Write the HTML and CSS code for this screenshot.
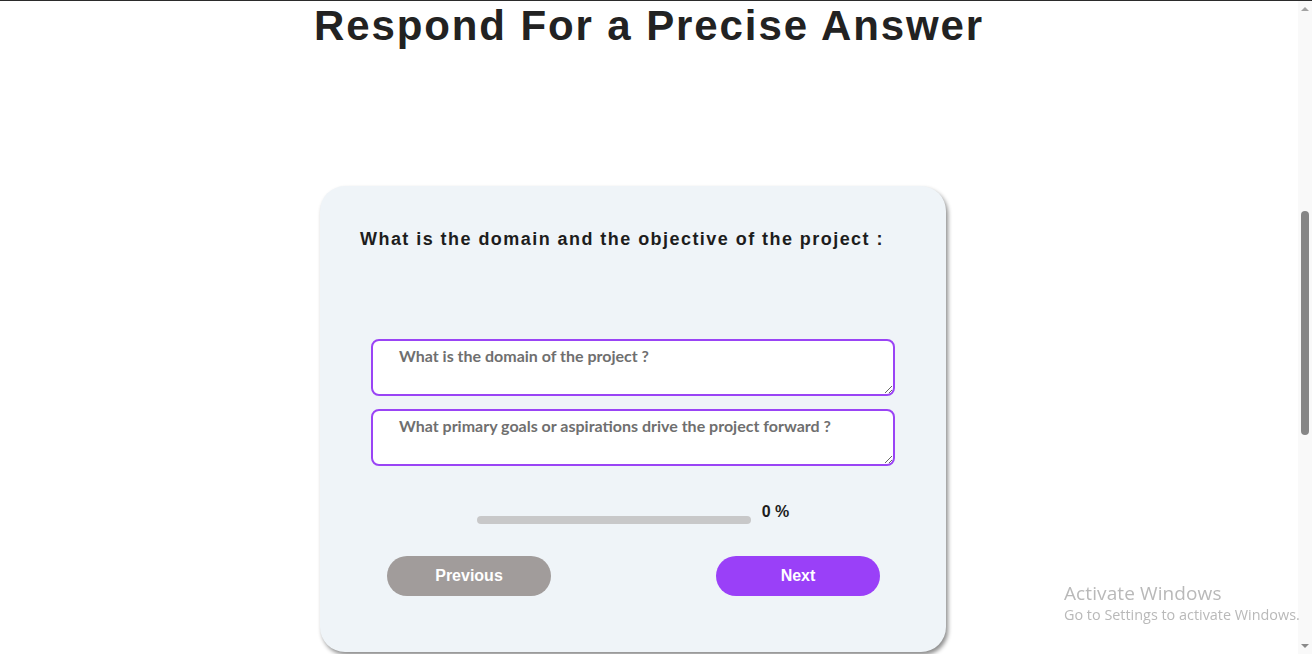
FILE: index.html
```html
<!DOCTYPE html>
<html>
<head>
<meta charset="utf-8">
<link rel="stylesheet" href="styles.css">
</head>
<body>
<div class="page">
  <h1 class="title">Respond For a Precise Answer</h1>
  <div class="card">
    <h2 class="question">What is the domain and the objective of the project :</h2>
    <div class="fields">
      <textarea class="field" placeholder="What is the domain of the project ?"></textarea>
      <textarea class="field" placeholder="What primary goals or aspirations drive the project forward ?"></textarea>
    </div>
    <div class="progress">
      <div class="bar"><div class="fill" style="width:0%"></div></div>
      <span class="pct">0 %</span>
    </div>
    <div class="actions">
      <button class="btn prev">Previous</button>
      <button class="btn next">Next</button>
    </div>
  </div>
</div>
<div class="scrollbar">
  <span class="arrow up"></span>
  <div class="thumb"></div>
  <span class="arrow down"></span>
</div>
<div class="watermark">
  <div class="wm-title">Activate Windows</div>
  <div class="wm-sub">Go to Settings to activate Windows.</div>
</div>
</body>
</html>
```

FILE: styles.css
```css
html, body {
  margin: 0;
  padding: 0;
  background: #ffffff;
  overflow: hidden;
  height: 654px;
}
body {
  font-family: "Liberation Sans", Arial, sans-serif;
  border-top: 1px solid #2b2b2b;
  box-sizing: border-box;
}
.page {
  width: 1298px;
  display: flex;
  flex-direction: column;
}
.title {
  margin: 1px 0 0 0;
  text-align: center;
  font-size: 42px;
  font-weight: 700;
  letter-spacing: 1.9px;
  color: #222222;
  line-height: 48px;
}
.card {
  margin: 136px 0 0 320px;
  width: 626px;
  height: 466px;
  box-sizing: border-box;
  background: #eff4f8;
  border-radius: 25px;
  box-shadow: 2px 3px 4px rgba(0,0,0,0.45);
  padding: 42px 0 0 0;
  display: flex;
  flex-direction: column;
}
.question {
  margin: 0 0 0 40px;
  font-size: 18px;
  font-weight: 700;
  letter-spacing: 1.45px;
  color: #1d1d1d;
  line-height: 22px;
}
.fields {
  margin-top: 89px;
  display: flex;
  flex-direction: column;
  align-items: center;
  gap: 13px;
}
.field {
  width: 524px;
  height: 57px;
  box-sizing: border-box;
  border: 2px solid #9a44f5;
  border-radius: 8px;
  background: #ffffff;
  padding: 5px 20px 6px 26px;
  font-family: "Lato", "Open Sans", sans-serif;
  font-weight: 700;
  font-size: 16px;
  outline: none;
  display: block;
}
.field::placeholder {
  color: #6f6f6f;
  opacity: 1;
}
.progress {
  margin-top: 40px;
  display: flex;
  justify-content: center;
  align-items: flex-end;
  gap: 11px;
}
.bar {
  width: 274px;
  height: 8px;
  border-radius: 4px;
  background: #c8c8c9;
}
.fill {
  height: 100%;
  border-radius: 4px;
  background: #9a40f8;
}
.pct {
  font-size: 16px;
  font-weight: 700;
  color: #1d1d1d;
  line-height: 18px;
  position: relative;
  top: -3px;
}
.actions {
  margin-top: 32px;
  display: flex;
  justify-content: space-between;
  padding: 0 66px 0 67px;
}
.btn {
  width: 164px;
  height: 40px;
  border: none;
  border-radius: 20px;
  color: #ffffff;
  font-family: "Liberation Sans", Arial, sans-serif;
  font-weight: 700;
  font-size: 16px;
  cursor: pointer;
}
.prev { background: #a19c9b; }
.next { background: #9a40f8; }
.scrollbar {
  position: fixed;
  top: 1px;
  right: 0;
  width: 14px;
  height: 653px;
  background: #f9f9f9;
}
.thumb {
  position: absolute;
  left: 3px;
  top: 210px;
  width: 8px;
  height: 224px;
  border-radius: 4px;
  background: #868686;
}
.arrow {
  position: absolute;
  left: 3px;
  width: 0;
  height: 0;
  border-left: 4px solid transparent;
  border-right: 4px solid transparent;
}
.arrow.up { top: 6px; border-bottom: 4px solid #a3a3a3; }
.arrow.down { bottom: 6px; border-top: 4px solid #8a8a8a; }
.watermark {
  position: fixed;
  left: 1064px;
  top: 581px;
  color: #b9b9b9;
  font-family: "Open Sans", "Noto Sans", sans-serif;
}
.wm-title {
  font-size: 19px;
  line-height: 24px;
  letter-spacing: 0.1px;
}
.wm-sub {
  font-size: 14.4px;
  line-height: 20px;
}
```
